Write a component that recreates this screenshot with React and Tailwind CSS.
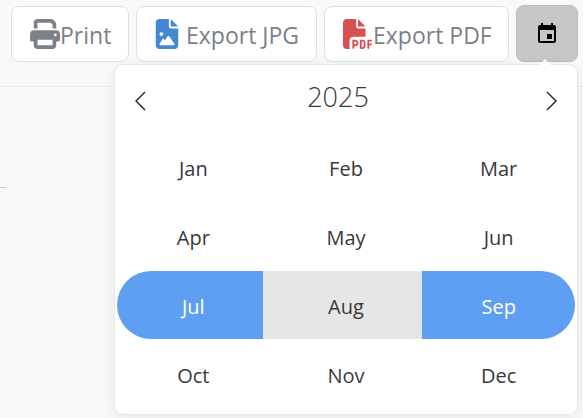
import { FaPrint, FaFileImage, FaFilePdf } from "react-icons/fa6";
import { MdEvent } from "react-icons/md";

const months = ["Jan", "Feb", "Mar", "Apr", "May", "Jun", "Jul", "Aug", "Sep", "Oct", "Nov", "Dec"];

const monthStyles = {
  Jul: "rounded-l-full bg-[#5e9ff4] text-white",
  Aug: "bg-[#e6e6e6] text-[#393939] shadow-[-7px_0_0_#e6e6e6]",
  Sep: "rounded-r-full bg-[#5e9ff4] text-white",
};

function ToolButton({ className, icon, label }) {
  return (
    <button
      type="button"
      className={`flex h-14 shrink-0 items-center rounded-lg border border-[#dddfe5] bg-white text-[23px] whitespace-nowrap text-[#7c8087] ${className}`}
    >
      {icon}
      <span className="pt-0.5">{label}</span>
    </button>
  );
}

function Chevron({ d }) {
  return (
    <svg viewBox="0 0 12 20" className="h-5 w-3" fill="none" stroke="#1f1f1f" strokeWidth="1.4" aria-hidden="true">
      <path d={d} />
    </svg>
  );
}

function MonthPicker() {
  return (
    <section
      aria-label="Choose months"
      className="absolute top-full right-px mt-[3px] w-[462px] rounded-lg bg-white px-0.5 pb-1.5 text-[#393939] shadow-[0_0_0_1px_#e6e6e6,0_4px_18px_rgba(0,0,0,0.08)]"
    >
      <span className="absolute -top-[6px] right-[25px] h-0 w-0 border-x-[7px] border-b-[7px] border-x-transparent border-b-white" />
      <header className="flex h-[68px] items-center justify-between px-[17px]">
        <button type="button" aria-label="Previous year" className="pt-1">
          <Chevron d="M11 1 2 10l9 9" />
        </button>
        <h2 className="pr-4 pb-1 text-[27px] font-light">2025</h2>
        <button type="button" aria-label="Next year" className="pt-1">
          <Chevron d="M1 1l9 9-9 9" />
        </button>
      </header>
      <div className="grid grid-cols-3 gap-y-px">
        {months.map((month) => (
          <button key={month} type="button" className={`h-[68px] pt-[3px] text-xl ${monthStyles[month] ?? ""}`}>
            {month}
          </button>
        ))}
      </div>
    </section>
  );
}

export default function App() {
  return (
    <main className="min-h-screen overflow-hidden bg-[#f8f9fb] font-['Open_Sans','Noto_Sans',sans-serif]">
      <div className="relative flex items-end justify-end gap-[7px] pt-[5px] pr-[5px]">
        <ToolButton
          className="w-[118px] pl-[18px]"
          icon={<FaPrint className="size-[30px]" />}
          label="Print"
        />
        <ToolButton
          className="w-[181px] gap-1 pl-[15px]"
          icon={<FaFileImage className="size-[30px] text-[#4587d0]" />}
          label="Export JPG"
        />
        <ToolButton
          className="w-[185px] pl-[18px]"
          icon={<FaFilePdf className="size-[30px] text-[#d9504e]" />}
          label="Export PDF"
        />
        <div className="relative">
          <button
            type="button"
            aria-label="Pick a date range"
            className="flex h-[57px] w-[62px] items-center justify-center rounded-lg border border-[#babbbd] bg-[#c6c7c9] text-black"
          >
            <MdEvent className="size-6" />
          </button>
          <MonthPicker />
        </div>
      </div>
      <div className="mt-6 border-t border-dotted border-[#dcdee1]" />
      <div className="mt-[100px] w-1.5 border-t border-[#c6c8ca]" />
    </main>
  );
}
